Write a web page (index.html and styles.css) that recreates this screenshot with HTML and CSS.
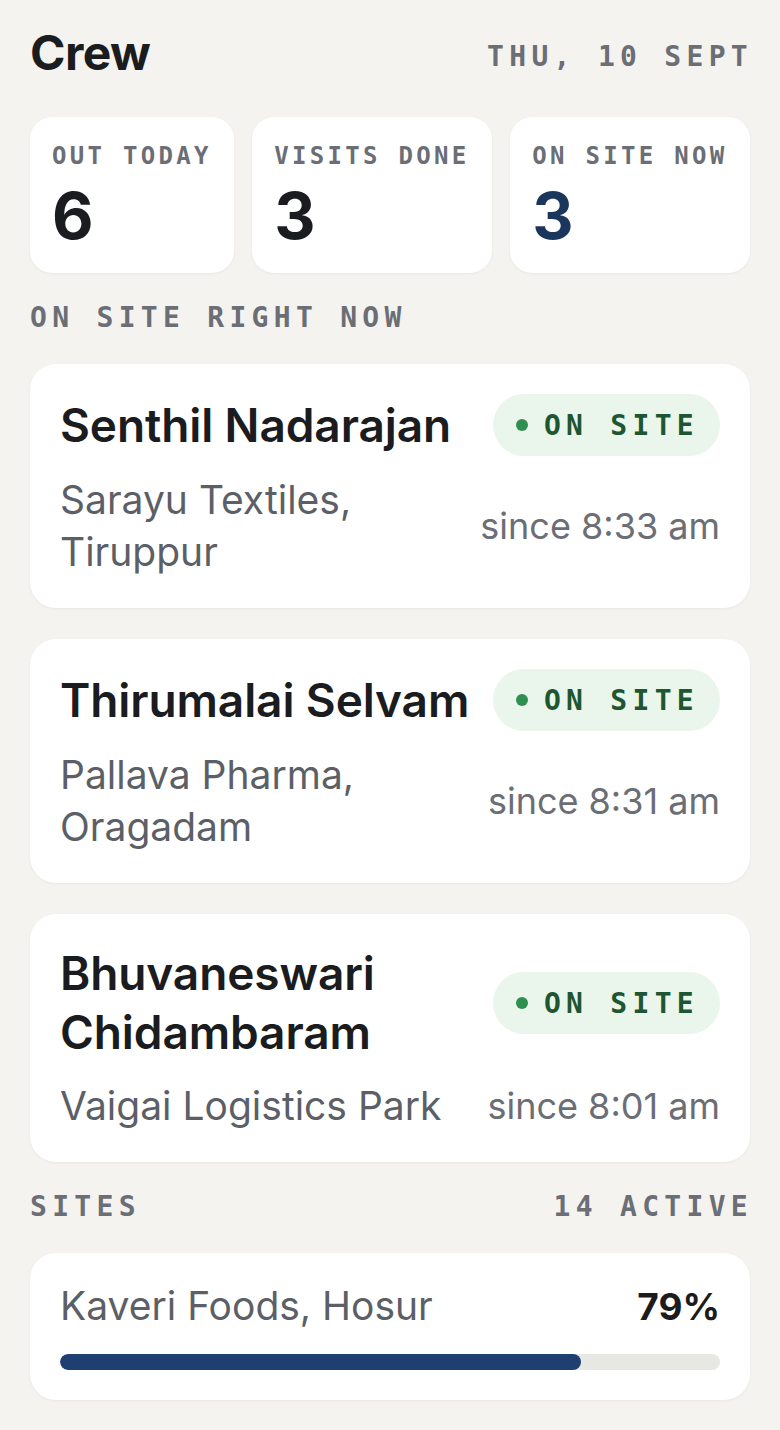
FILE: index.html
```html
<!DOCTYPE html>
<html lang="en">
<head>
    <meta charset="UTF-8">
    <meta name="viewport" content="width=device-width, initial-scale=1.0">
    <title>Crew</title>
    <link rel="stylesheet" href="styles.css">
</head>
<body>
    <div class="page">
        <header class="top">
            <h1>Crew</h1>
            <span class="mono date">THU, 10 SEPT</span>
        </header>

        <div class="stats">
            <div class="stat">
                <div class="mono stat-label">OUT TODAY</div>
                <div class="stat-num">6</div>
            </div>
            <div class="stat">
                <div class="mono stat-label">VISITS DONE</div>
                <div class="stat-num">3</div>
            </div>
            <div class="stat">
                <div class="mono stat-label">ON SITE NOW</div>
                <div class="stat-num blue">3</div>
            </div>
        </div>

        <h3 class="mono section">ON SITE RIGHT NOW</h3>

        <div class="card person">
            <div class="person-head">
                <div class="name">Senthil Nadarajan</div>
                <span class="mono badge"><i class="dot"></i>ON SITE</span>
            </div>
            <div class="person-body">
                <div class="place">Sarayu Textiles, Tiruppur</div>
                <div class="since">since 8:33 am</div>
            </div>
        </div>

        <div class="card person">
            <div class="person-head">
                <div class="name">Thirumalai Selvam</div>
                <span class="mono badge"><i class="dot"></i>ON SITE</span>
            </div>
            <div class="person-body">
                <div class="place">Pallava Pharma, Oragadam</div>
                <div class="since">since 8:31 am</div>
            </div>
        </div>

        <div class="card person">
            <div class="person-head">
                <div class="name">Bhuvaneswari Chidambaram</div>
                <span class="mono badge"><i class="dot"></i>ON SITE</span>
            </div>
            <div class="person-body">
                <div class="place">Vaigai Logistics Park</div>
                <div class="since">since 8:01 am</div>
            </div>
        </div>

        <div class="section-row">
            <h3 class="mono section">SITES</h3>
            <span class="mono section count">14 ACTIVE</span>
        </div>

        <div class="card site">
            <div class="site-head">
                <span class="site-name">Kaveri Foods, Hosur</span>
                <span class="site-pct">79%</span>
            </div>
            <div class="bar"><div class="bar-fill" style="width: 79%"></div></div>
        </div>
    </div>
</body>
</html>
```

FILE: styles.css
```css
body {
    margin: 0;
    background-color: #f4f3f0;
    color: #1b1c20;
    font-family: Inter, "Noto Sans", sans-serif;
}
.page {
    padding: 24px 30px 30px;
}
.mono {
    font-family: "DejaVu Sans Mono", "Liberation Mono", monospace;
    font-weight: bold;
    color: #6b6e75;
    letter-spacing: 5.3px;
}
.top {
    display: flex;
    justify-content: space-between;
    align-items: center;
    height: 58px;
}
h1 {
    margin: 0;
    font-size: 48px;
    font-weight: 700;
    letter-spacing: -0.6px;
    line-height: 58px;
}
.date {
    font-size: 28px;
    margin: 6px -3px 0 0;
}
.stats {
    display: flex;
    gap: 18px;
    margin-top: 35px;
}
.stat {
    flex: 1 1 auto;
    background: #fff;
    border-radius: 22px;
    padding: 24px 22px 25px;
    box-shadow: 0 1px 3px rgba(0, 0, 0, 0.05);
}
.stat-label {
    font-size: 24px;
    letter-spacing: 3.3px;
    line-height: 31px;
    white-space: nowrap;
}
.stat-num {
    margin-top: 12px;
    font-size: 64px;
    font-weight: 700;
    line-height: 64px;
}
.blue {
    color: #1b365d;
}
.section {
    margin: 29px 0 31px;
    font-size: 28px;
    line-height: 31px;
}
.section-row {
    display: flex;
    justify-content: space-between;
}
.count {
    margin-right: -3px;
}
.card {
    background: #fff;
    border-radius: 26px;
    padding: 30px;
    box-shadow: 0 1px 3px rgba(0, 0, 0, 0.05);
}
.person + .person {
    margin-top: 31px;
}
.person-head {
    display: flex;
    justify-content: space-between;
    align-items: center;
    gap: 20px;
    min-height: 62px;
}
.name {
    font-size: 46px;
    font-weight: 600;
    line-height: 59px;
    letter-spacing: -0.1px;
}
.badge {
    flex: none;
    display: flex;
    align-items: center;
    height: 62px;
    padding: 0 21px 0 23px;
    border-radius: 31px;
    background: #eaf5eb;
    color: #1e5631;
    font-size: 28px;
}
.dot {
    width: 12px;
    height: 12px;
    border-radius: 50%;
    background: #2f8f4e;
    margin-right: 16px;
}
.person-body {
    display: flex;
    justify-content: space-between;
    align-items: center;
    gap: 30px;
    margin-top: 18px;
    line-height: 52px;
}
.place {
    font-size: 39px;
    color: #5c5f66;
}
.since {
    flex: none;
    font-size: 36px;
    color: #6b6e75;
}
.site-head {
    display: flex;
    justify-content: space-between;
    align-items: baseline;
    line-height: 46px;
}
.site-name {
    font-size: 39px;
    color: #5c5f66;
}
.site-pct {
    font-size: 37px;
    font-weight: 700;
}
.bar {
    margin-top: 24px;
    height: 16px;
    border-radius: 8px;
    background: #e7e7e4;
    overflow: hidden;
}
.bar-fill {
    height: 100%;
    border-radius: 8px;
    background: #1f3f73;
}
```
